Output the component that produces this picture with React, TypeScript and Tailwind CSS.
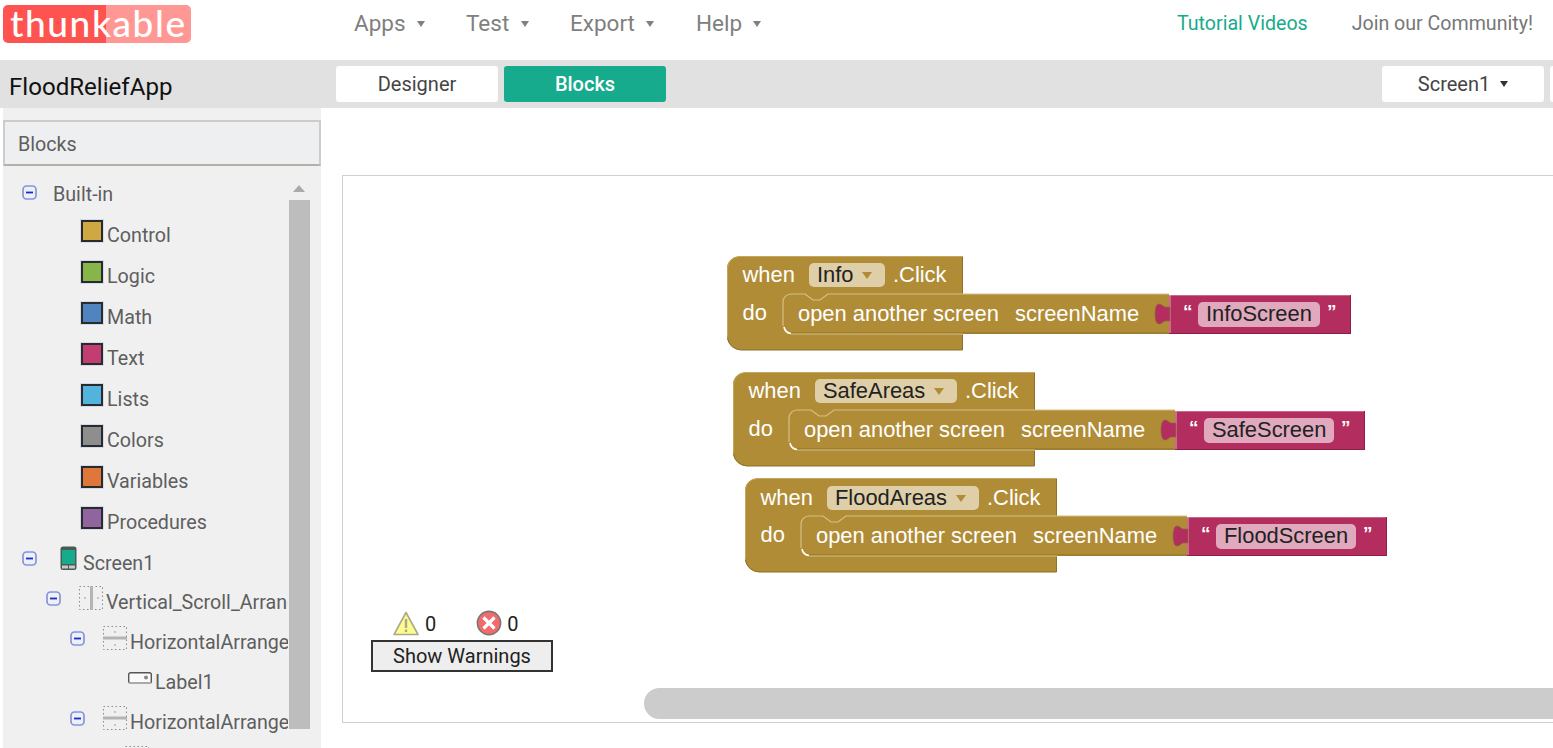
const ROBOTO = "font-['Roboto',sans-serif]";

function Caret({ className = "" }: { className?: string }) {
  return (
    <svg width="8" height="6" viewBox="0 0 8 6" className={className}>
      <path d="M0 0h8L4 6z" fill="currentColor" />
    </svg>
  );
}

function MinusBox({ up = 4 }: { up?: number }) {
  return (
    <svg width="15" height="15" viewBox="0 0 15 15" className="shrink-0" style={{ marginBottom: up * 2 }}>
      <rect x="1" y="1" width="13" height="13" rx="3.5" fill="#eef0f8" stroke="#8496d8" strokeWidth="1.7" />
      <rect x="4" y="6.6" width="7" height="1.8" fill="#1c2ac4" />
    </svg>
  );
}

function Swatch({ color }: { color: string }) {
  return <span className="mb-[8px] mr-[4px] block h-[22px] w-[22px] shrink-0 border-2 border-[#2a2a2a] outline outline-1 outline-[#d3dbee]" style={{ background: color }} />;
}

function PhoneIcon() {
  return (
    <svg width="18" height="25" viewBox="0 0 18 25" className="mb-[8px] shrink-0">
      <rect x="0.5" y="0.5" width="16" height="23.5" rx="2.5" fill="#4a5a55" />
      <rect x="2" y="4" width="13" height="14" fill="#16ab8c" />
      <rect x="2" y="19.5" width="13" height="3" fill="#c9c9c9" />
      <rect x="8" y="19" width="1" height="4" fill="#4a5a55" />
    </svg>
  );
}

function ArrangeIcon({ vertical }: { vertical?: boolean }) {
  return (
    <svg width="25" height="25" viewBox="0 0 25 25" className="mb-[8px] shrink-0">
      <rect x="0.5" y="0.5" width="23" height="23" fill="none" stroke="#8a8a8a" strokeWidth="1" strokeDasharray="1.5 2.5" />
      {vertical ? (
        <rect x="11" y="0" width="3" height="24" fill="#b4b4b4" />
      ) : (
        <rect x="0" y="10.5" width="24" height="3" fill="#b4b4b4" />
      )}
      <rect x={vertical ? 5 : 11} y={vertical ? 11 : 5} width="2" height="2" fill="#c4c4c4" />
      <rect x={vertical ? 18 : 11} y={vertical ? 11 : 18} width="2" height="2" fill="#c4c4c4" />
    </svg>
  );
}

function LabelIcon() {
  return (
    <svg width="24" height="13" viewBox="0 0 24 13" className="mb-[8px] shrink-0">
      <rect x="0.7" y="0.7" width="22.6" height="10.6" rx="2" fill="#fafafa" stroke="#555" strokeWidth="1.4" />
      <rect x="1" y="10" width="22" height="2" fill="#aaa" />
      <circle cx="18" cy="5.6" r="2" fill="#888" />
    </svg>
  );
}

function Row({ indent, minus, gap, up, children }: { indent: number; minus?: boolean; gap?: number; up?: number; children: React.ReactNode }) {
  return (
    <div className="flex h-[40px] shrink-0 items-center whitespace-nowrap" style={{ paddingLeft: indent }}>
      {minus && <MinusBox up={up} />}
      <span className="shrink-0" style={{ width: gap ?? 0 }} />
      {children}
    </div>
  );
}

const categories = [
  ["Control", "#cfa843"],
  ["Logic", "#87b548"],
  ["Math", "#4f84c0"],
  ["Text", "#c23e72"],
  ["Lists", "#52b3dc"],
  ["Colors", "#8e8e8e"],
  ["Variables", "#e0773a"],
  ["Procedures", "#90659f"],
];

function Sidebar() {
  return (
    <aside className="ml-[3px] flex w-[318px] shrink-0 flex-col bg-[#f0f0f0] text-[19.7px] text-[#5e5e5e]">
      <div className="mt-[12px] flex h-[46px] items-center border-2 border-[#cccccc] border-b-[#b0b2a5] bg-[#eeeff1] pl-[13px] pt-[3px]">Blocks</div>
      <div className="relative flex-1 overflow-hidden pt-[7px]">
        <div className="w-[285px] overflow-hidden">
          <div className="flex h-[41px] items-center whitespace-nowrap pl-[19px]">
            <MinusBox up={1} />
            <span className="ml-[16px] mt-[2px]">Built-in</span>
          </div>
          {categories.map(([name, color]) => (
            <div key={name} className="flex h-[41px] items-center whitespace-nowrap pl-[78px]">
              <Swatch color={color} />
              <span className="mt-[3px]">{name}</span>
            </div>
          ))}
          <Row indent={19} minus gap={23}>
            <PhoneIcon />
            <span className="ml-[5px] mt-[3px]">Screen1</span>
          </Row>
          <Row indent={43} minus gap={18}>
            <ArrangeIcon vertical />
            <span className="ml-[2px] mt-[2px]">Vertical_Scroll_Arrangement1</span>
          </Row>
          <Row indent={67} minus gap={18}>
            <ArrangeIcon />
            <span className="ml-[2px] mt-[2px]">HorizontalArrangement1</span>
          </Row>
          <Row indent={125}>
            <LabelIcon />
            <span className="ml-[3px] mt-[2px]">Label1</span>
          </Row>
          <Row indent={67} minus gap={18}>
            <ArrangeIcon />
            <span className="ml-[2px] mt-[2px]">HorizontalArrangement2</span>
          </Row>
          <Row indent={122}>
            <ArrangeIcon />
          </Row>
        </div>
        {/* scrollbar */}
        <svg width="12" height="7" viewBox="0 0 12 7" className="absolute left-[290px] top-[19px]">
          <path d="M0 7L6 0l6 7z" fill="#aaa" />
        </svg>
        <div className="absolute left-[286px] top-[34px] h-[529px] w-[21px] bg-[#bdbdbd]" />
      </div>
    </aside>
  );
}

const GOLD = "#b18c37";
const MAGENTA = "#b32d5e";

type BlockProps = {
  x: number;
  y: number;
  dy?: number;
  name: string;
  pillW: number;
  right: number; // width of the event hat
  joint: number; // where the text block starts
  value: string;
  valueW: number;
  total: number;
};

// one "when X.Click do open another screen" stack
function Block({ x, y, dy = 0, name, pillW, right, joint, value, valueW, total }: BlockProps) {
  const top = 38;
  const inner = 56;
  const bottom = 78;
  const pillX = 82;
  const valX = joint + 29;
  const font = { fontFamily: "'Liberation Sans', Arial, sans-serif", fontSize: 21.9 };
  return (
    <svg width={total + 4} height={98} viewBox={`0 0 ${total + 4} 98`} className="absolute" style={{ left: x, top: y }}>
      {/* hat and arm */}
      <path d={`M12 .5H${right}V94H14a14 14 0 0 1-14-14V12A12 12 0 0 1 12 .5z`} fill={GOLD} />
      <rect x={right - 1} y={top} width={joint - right + 1} height={bottom - top} fill={GOLD} />
      <path d={`M${right} .5H12A12 12 0 0 0 .5 12V80`} fill="none" stroke="#c4a85f" strokeWidth="1" />
      <path d={`M${right - .5} 1V${top}M${right - .5} ${bottom}V94H14a14 14 0 0 1-13.5-12`} fill="none" stroke="#8e7029" strokeWidth="1" />

      {/* statement slot outline */}
      <path
        d={`M${inner} ${bottom - 8}V${top + 8}a8 8 0 0 1 8-8H${inner + 22}l8 6h7l8-6H${joint}`}
        fill="none"
        stroke="#d5c083"
        strokeWidth="1.2"
      />
      <path d={`M${inner + 1} ${bottom - 7}a8 8 0 0 0 7 6.5`} fill="none" stroke="#fff" strokeWidth="1.6" />
      <path d={`M${inner + 8} ${bottom - 1}H${joint}`} stroke="#8e7029" strokeWidth="1" />
      <path d={`M${inner + 8} ${bottom}H${right}`} stroke="#d5c083" strokeWidth="1" />

      {/* text value block */}
      <rect x={joint} y={top + 1} width={total - joint} height={39} fill={MAGENTA} />
      <path d={`M${joint} ${top + 1.5}H${total}`} stroke="#c9688c" strokeWidth="1" />
      <path d={`M${joint + 1} ${top + 1}V${top + 40}`} stroke="#e3a9bf" strokeWidth="1" />
      <path d={`M${total - .5} ${top + 1}V${top + 40}M${joint} ${top + 39.5}H${total}`} stroke="#8e2048" strokeWidth="1" />
      {/* puzzle tab */}
      <path
        d={`M${joint + 1} ${top + 13}H${joint - 4}C${joint - 7} ${top + 12} ${joint - 7} ${top + 10} ${joint - 10} ${top + 10}C${joint - 13} ${top + 10} ${joint - 14} ${top + 15} ${joint - 14} ${top + 20}C${joint - 14} ${top + 25} ${joint - 13} ${top + 30} ${joint - 10} ${top + 30}C${joint - 7} ${top + 30} ${joint - 7} ${top + 28} ${joint - 4} ${top + 27}H${joint + 1}z`}
        fill={MAGENTA}
        stroke="#8e6a40"
        strokeWidth="0.7"
      />

      <rect x={pillX} y={7 + dy} width={pillW} height={24} rx="5" fill="#dfcfa8" />
      <path d={`M${pillX + pillW - 23} ${16 + dy}h10l-5 7z`} fill={GOLD} />

      <rect x={valX} y={top + 8} width={valueW} height={25} rx="5" fill="#e0a9be" />

      <g style={font} fill="#fff">
        <text x={15.5} y={26 + dy}>when</text>
        <text x={pillX + pillW + 8} y={26 + dy}>.Click</text>
        <text x={15.5} y={64}>do</text>
        <text x={inner + 15} y={65}>open another screen</text>
        <text x={inner + 232} y={65}>screenName</text>
      </g>
      <g style={font} fill="#222">
        <text x={pillX + 8} y={26 + dy}>{name}</text>
        <text x={valX + 8} y={65}>{value}</text>
      </g>
      <g style={{ fontFamily: "'Liberation Sans', Arial, sans-serif", fontSize: 19, fontWeight: 700 }} fill="#fff">
        <text x={joint + 14} y={62}>“</text>
        <text x={valX + valueW + 7} y={62}>”</text>
      </g>
    </svg>
  );
}

function WarnIcon() {
  return (
    <svg width="26" height="25" viewBox="0 0 26 25">
      <path d="M13 1.5L25 23.5H1z" fill="#fdfd8f" stroke="#a9a98d" strokeWidth="1.6" strokeLinejoin="round" />
      <rect x="11.8" y="8" width="2.4" height="9" fill="#a9a98d" />
      <rect x="11.8" y="18.5" width="2.4" height="2.6" fill="#a9a98d" />
    </svg>
  );
}

function ErrorIcon() {
  return (
    <svg width="26" height="26" viewBox="0 0 26 26">
      <circle cx="13" cy="13" r="11.6" fill="#f26a6a" stroke="#777" strokeWidth="1.6" />
      <path d="M7.5 7.5l11 11M18.5 7.5l-11 11" stroke="#fff" strokeWidth="3.2" />
    </svg>
  );
}

function Canvas() {
  return (
    <div className="relative ml-[21px] mt-[67px] h-[548px] flex-1 border border-r-0 border-[#d0d0d0] bg-white">
      <Block x={384} y={80} name="Info" pillW={76} right={236} joint={442} value="InfoScreen" valueW={122} total={624} />
      <Block x={390} y={196} name="SafeAreas" pillW={142} right={302} joint={442} value="SafeScreen" valueW={130} total={632} />
      <Block x={402} y={302} dy={1} name="FloodAreas" pillW={152} right={312} joint={442} value="FloodScreen" valueW={140} total={642} />

      <div className="absolute left-[28px] top-[430px] flex w-[182px] flex-col text-[20px] text-[#222]">
        <div className="flex h-[34px] items-center pl-[22px]">
          <WarnIcon />
          <span className="ml-[6px] mt-[1px]">0</span>
          <span className="ml-[40px]"><ErrorIcon /></span>
          <span className="ml-[5px] mt-[1px]">0</span>
        </div>
        <button className="h-[32px] border-2 border-[#333] bg-[#eeeeee] text-[20px] leading-none text-[#222]">Show Warnings</button>
      </div>

      <div className="absolute left-[301px] top-[512px] h-[31px] w-[1000px] rounded-full bg-[#cccccc]" />
    </div>
  );
}

export default function App() {
  return (
    <div className={`flex h-[748px] w-[1553px] flex-col overflow-hidden bg-white ${ROBOTO}`}>
      <header className="flex h-[60px] shrink-0 items-start">
        <div className="relative ml-[3px] mt-[5px] flex h-[38px] w-[188px] shrink-0">
          <span className="w-[103px] rounded-l-[5px] bg-[#ff5350]" />
          <span className="flex-1 rounded-r-[5px] bg-[#ff9794]" />
          <span className="absolute left-[7px] top-0 font-['Lato',sans-serif] text-[37px] font-medium leading-[36px] tracking-[1.6px] text-white">thunkable</span>
        </div>
        <nav className="ml-[163px] mt-[9px] flex h-[29px] items-center text-[22.5px] text-[#808080]">
          <span className="w-[62px]">Apps</span>
          <Caret className="ml-[1px] mr-[41px]" />
          <span className="w-[54px]">Test</span>
          <Caret className="ml-[1px] mr-[41px]" />
          <span className="w-[75px]">Export</span>
          <Caret className="ml-[1px] mr-[42px]" />
          <span className="w-[56px]">Help</span>
          <Caret className="ml-[1px]" />
        </nav>
        <span className="ml-auto mt-[9px] flex h-[30px] items-center text-[19.6px] text-[#16ab8c]">Tutorial Videos</span>
        <span className="ml-[44px] mr-[20px] mt-[9px] flex h-[30px] items-center text-[19.6px] text-[#777777]">Join our Community!</span>
      </header>

      <div className="flex h-[48px] shrink-0 items-center bg-[#e1e1e1]">
        <div className="w-[336px] shrink-0 pl-[9px] pt-[7px] text-[24.1px] text-[#111]">FloodReliefApp</div>
        <button className="h-[36px] w-[162px] rounded-[3px] bg-white text-[20px] text-[#444]">Designer</button>
        <button className="ml-[6px] h-[36px] w-[162px] rounded-[3px] bg-[#16ab8c] text-[20px] font-medium text-white">Blocks</button>
        <button className="ml-auto flex h-[36px] w-[162px] items-center justify-center gap-[10px] rounded-[3px] bg-white text-[20px] text-[#444]">
          Screen1
          <Caret className="text-[#333]" />
        </button>
        <span className="ml-[6px] h-[36px] w-[3px] rounded-l-[3px] bg-white" />
      </div>

      <div className="flex min-h-0 flex-1">
        <Sidebar />
        <Canvas />
      </div>
    </div>
  );
}
